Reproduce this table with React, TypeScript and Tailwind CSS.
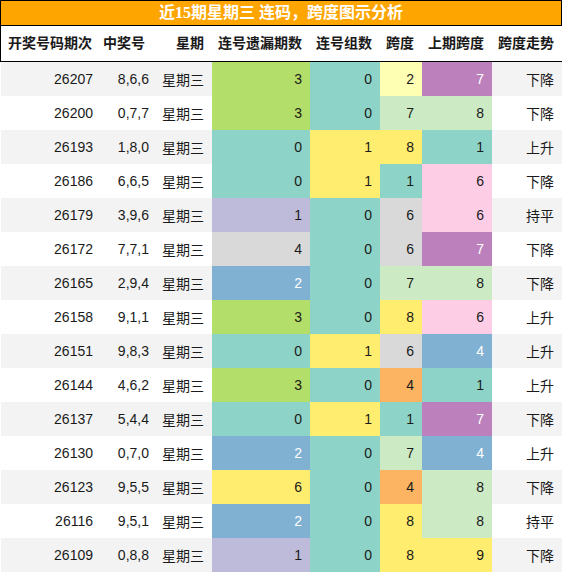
import React from "react";

type Cell = { v: number; bg: string; light?: boolean };

const C = {
  green: "bg-[#b3de69]",
  teal: "bg-[#8dd3c7]",
  lyellow: "bg-[#ffffb3]",
  purple: "bg-[#bc80bd]",
  lgreen: "bg-[#ccebc5]",
  yellow: "bg-[#ffed6f]",
  pink: "bg-[#fccde5]",
  lav: "bg-[#bebada]",
  gray: "bg-[#d9d9d9]",
  blue: "bg-[#80b1d3]",
  orange: "bg-[#fdb462]",
};

const c = (v: number, bg: string): Cell => ({
  v,
  bg,
  light: bg === C.purple || bg === C.blue,
});

const rows: [string, string, Cell, Cell, Cell, Cell, string][] = [
  ["26207", "8,6,6", c(3, C.green), c(0, C.teal), c(2, C.lyellow), c(7, C.purple), "下降"],
  ["26200", "0,7,7", c(3, C.green), c(0, C.teal), c(7, C.lgreen), c(8, C.lgreen), "下降"],
  ["26193", "1,8,0", c(0, C.teal), c(1, C.yellow), c(8, C.yellow), c(1, C.teal), "上升"],
  ["26186", "6,6,5", c(0, C.teal), c(1, C.yellow), c(1, C.teal), c(6, C.pink), "下降"],
  ["26179", "3,9,6", c(1, C.lav), c(0, C.teal), c(6, C.gray), c(6, C.pink), "持平"],
  ["26172", "7,7,1", c(4, C.gray), c(0, C.teal), c(6, C.gray), c(7, C.purple), "下降"],
  ["26165", "2,9,4", c(2, C.blue), c(0, C.teal), c(7, C.lgreen), c(8, C.lgreen), "下降"],
  ["26158", "9,1,1", c(3, C.green), c(0, C.teal), c(8, C.yellow), c(6, C.pink), "上升"],
  ["26151", "9,8,3", c(0, C.teal), c(1, C.yellow), c(6, C.gray), c(4, C.blue), "上升"],
  ["26144", "4,6,2", c(3, C.green), c(0, C.teal), c(4, C.orange), c(1, C.teal), "上升"],
  ["26137", "5,4,4", c(0, C.teal), c(1, C.yellow), c(1, C.teal), c(7, C.purple), "下降"],
  ["26130", "0,7,0", c(2, C.blue), c(0, C.teal), c(7, C.lgreen), c(4, C.blue), "上升"],
  ["26123", "9,5,5", c(6, C.yellow), c(0, C.teal), c(4, C.orange), c(8, C.lgreen), "下降"],
  ["26116", "9,5,1", c(2, C.blue), c(0, C.teal), c(8, C.yellow), c(8, C.lgreen), "持平"],
  ["26109", "0,8,8", c(1, C.lav), c(0, C.teal), c(8, C.yellow), c(9, C.yellow), "下降"],
];

const headers = ["开奖号码期次", "中奖号", "星期", "连号遗漏期数", "连号组数", "跨度", "上期跨度", "跨度走势"];

const grid = "grid grid-cols-[100px_52px_59px_98px_70px_42px_70px_70px]";

const App = () => {
  return (
    <div
      className="w-[562px] h-[573px] bg-white text-[14px] text-[#1a1a1a]"
      style={{ fontFamily: '"Liberation Sans", "Noto Sans CJK SC", sans-serif' }}
    >
      <div
        className="h-[26px] border border-black bg-[#ffa500] text-white font-bold text-[16px] flex items-center justify-center"
        style={{ fontFamily: '"Liberation Serif", "Noto Sans CJK SC", serif' }}
      >
        近15期星期三 连码，跨度图示分析
      </div>
      <div className={`${grid} h-[36px] border-l border-b border-black font-bold`}>
        {headers.map((h, i) => (
          <div
            key={h}
            className={`flex items-center ${i === 0 ? "pl-[7px]" : "justify-end pr-2"}`}
          >
            {h}
          </div>
        ))}
      </div>
      <div className="pl-px">
        {rows.map((r, i) => (
          <div
            key={r[0]}
            className={`${grid} h-[34px] ${i % 2 === 0 ? "bg-[#f3f3f3]" : "bg-white"}`}
          >
            <div className="flex items-center justify-end pr-2">{r[0]}</div>
            <div className="flex items-center justify-end pr-1">{r[1]}</div>
            <div className="flex items-center justify-end pr-2 pt-[3px]">星期三</div>
            {[r[2], r[3], r[4], r[5]].map((cell, j) => (
              <div
                key={j}
                className={`flex items-center justify-end pr-2 ${cell.bg} ${cell.light ? "text-white" : ""}`}
              >
                {cell.v}
              </div>
            ))}
            <div className="flex items-center justify-end pr-2 pt-[3px]">{r[6]}</div>
          </div>
        ))}
      </div>
    </div>
  );
};

export default App;
